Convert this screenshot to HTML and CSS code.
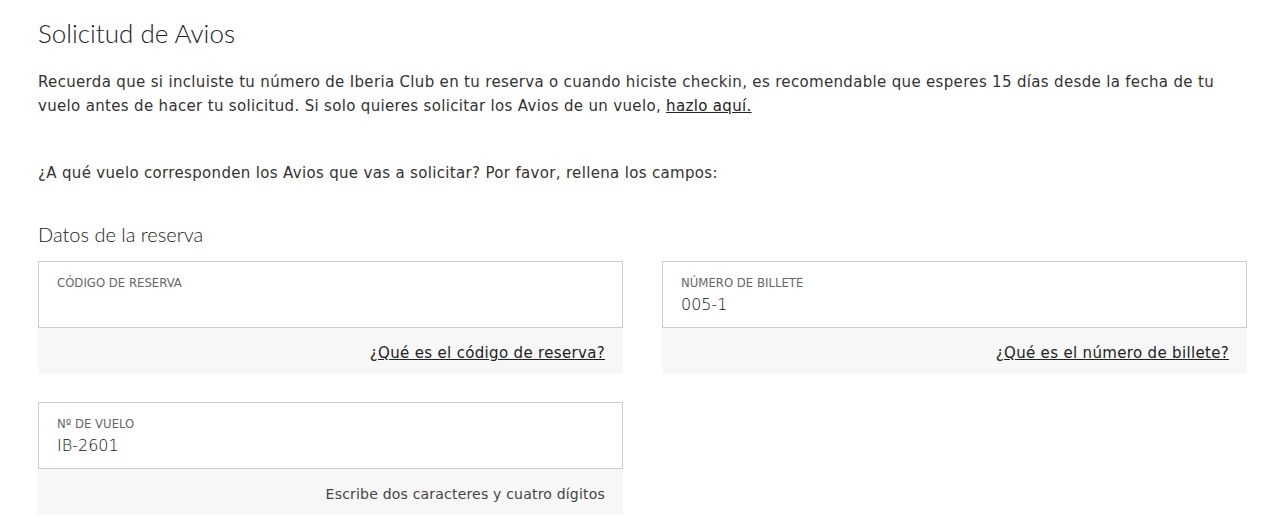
FILE: index.html
```html
<!DOCTYPE html>
<html lang="es">

<head>
  <meta charset="utf-8" />
  <meta name="viewport" content="width=device-width, initial-scale=1" />
  <link rel="stylesheet" href="styles.css">
</head>

<body>
  <div class="page">
    <h1 class="title">Solicitud de Avios</h1>
    <p class="intro">Recuerda que si incluiste tu número de Iberia Club en tu reserva o cuando hiciste checkin, es recomendable que esperes 15 días desde la fecha de tu vuelo antes de hacer tu solicitud. Si solo quieres solicitar los Avios de un vuelo, <a href="#">hazlo aquí.</a></p>
    <p class="question">¿A qué vuelo corresponden los Avios que vas a solicitar? Por favor, rellena los campos:</p>

    <h2 class="subtitle">Datos de la reserva</h2>

    <div class="fields">
      <div class="field">
        <label class="field-box">
          <span class="field-label">CÓDIGO DE RESERVA</span>
          <input class="field-input" type="text" value="">
        </label>
        <div class="field-help"><a href="#">¿Qué es el código de reserva?</a></div>
      </div>

      <div class="field">
        <label class="field-box">
          <span class="field-label">NÚMERO DE BILLETE</span>
          <input class="field-input" type="text" value="005-1">
        </label>
        <div class="field-help"><a href="#">¿Qué es el número de billete?</a></div>
      </div>

      <div class="field">
        <label class="field-box">
          <span class="field-label">Nº DE VUELO</span>
          <input class="field-input" type="text" value="IB-2601">
        </label>
        <div class="field-help hint">Escribe dos caracteres y cuatro dígitos</div>
      </div>
    </div>
  </div>
</body>

</html>
```

FILE: styles.css
```css
body {
  margin: 0;
  background: #ffffff;
  font-family: "DejaVu Sans", Verdana, sans-serif;
  color: #333333;
}

.page {
  padding: 0 33px 0 38px;
}

.title {
  margin: 0;
  padding-top: 16px;
  font-family: Lato, "Open Sans", sans-serif;
  font-weight: 300;
  font-size: 26px;
  line-height: 34px;
  color: #222222;
}

.intro {
  margin: 20px 0 0;
  font-size: 15px;
  line-height: 24px;
  letter-spacing: 0.33px;
}

.intro a,
.field-help a {
  color: #222222;
  text-decoration: underline;
}

.question {
  margin: 43px 0 0;
  font-size: 15px;
  line-height: 24px;
  letter-spacing: 0.33px;
}

.subtitle {
  margin: 36px 0 0;
  font-family: Lato, "Open Sans", sans-serif;
  font-weight: 300;
  font-size: 20px;
  line-height: 26px;
  color: #1a1a1a;
}

.fields {
  display: grid;
  grid-template-columns: 585px 585px;
  column-gap: 39px;
  row-gap: 28px;
  margin-top: 14px;
}

.field-box {
  display: flex;
  flex-direction: column;
  height: 67px;
  box-sizing: border-box;
  padding: 13px 18px 0;
  border: 1px solid #cccccc;
  background: #ffffff;
}

.field-label {
  font-family: "DejaVu Sans Condensed", "DejaVu Sans", sans-serif;
  font-size: 13px;
  line-height: 16px;
  color: #666666;
}

.field-input {
  border: 0;
  padding: 0;
  margin-top: 4px;
  outline: none;
  font-family: "DejaVu Sans", Verdana, sans-serif;
  font-weight: 200;
  font-size: 16px;
  line-height: 20px;
  color: #111111;
  background: transparent;
}

.field-help {
  height: 46px;
  box-sizing: border-box;
  padding: 15px 18px 0;
  background: #f7f7f7;
  text-align: right;
  font-size: 15px;
  line-height: 20px;
  letter-spacing: 0.33px;
}

.field-help.hint {
  font-size: 14px;
  letter-spacing: 0.2px;
  color: #444444;
}
```
